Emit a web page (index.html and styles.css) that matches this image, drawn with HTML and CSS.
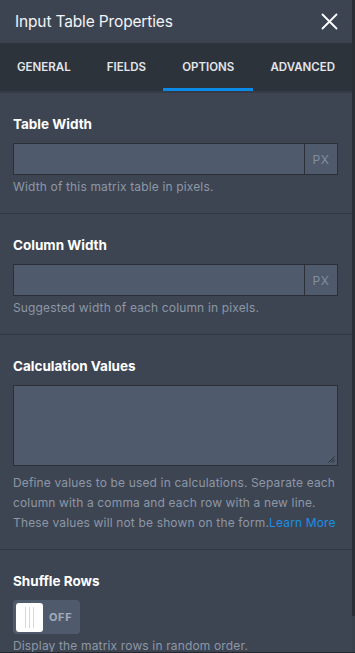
FILE: index.html
```html
<!DOCTYPE html>
<html lang="en">
<head>
<meta charset="utf-8">
<title>Input Table Properties</title>
<link rel="stylesheet" href="styles.css">
</head>
<body>
<div class="app">
  <div class="panel">
    <header class="header">
      <h1 class="title">Input Table Properties</h1>
      <button class="close" aria-label="Close">
        <svg width="17" height="17" viewBox="0 0 17 17"><path d="M1.5 1.5 L15.5 15.5 M15.5 1.5 L1.5 15.5" stroke="#ffffff" stroke-width="1.8" stroke-linecap="round" fill="none"/></svg>
      </button>
    </header>
    <nav class="tabs">
      <div class="tab">GENERAL</div>
      <div class="tab">FIELDS</div>
      <div class="tab active">OPTIONS</div>
      <div class="tab">ADVANCED</div>
    </nav>
    <div class="content">
      <section class="section">
        <div class="label">Table Width</div>
        <div class="input-group">
          <div class="input"></div>
          <div class="addon">PX</div>
        </div>
        <div class="help">Width of this matrix table in pixels.</div>
      </section>
      <section class="section">
        <div class="label">Column Width</div>
        <div class="input-group">
          <div class="input"></div>
          <div class="addon">PX</div>
        </div>
        <div class="help">Suggested width of each column in pixels.</div>
      </section>
      <section class="section">
        <div class="label">Calculation Values</div>
        <div class="textarea">
          <svg class="grip" width="7" height="7" viewBox="0 0 7 7"><path d="M6.5 0.5 L0.5 6.5 M6.5 3 L3 6.5 M6.5 5.2 L5.2 6.5" stroke="#2a2f37" stroke-width="1" fill="none"/></svg>
        </div>
        <div class="help help-area">Define values to be used in calculations. Separate each column with a comma and each row with a new line. These values will not be shown on the form.<a class="link" href="#">Learn More</a></div>
      </section>
      <section class="section">
        <div class="label">Shuffle Rows</div>
        <div class="toggle">
          <div class="knob"><span></span><span></span><span></span></div>
          <div class="toggle-text">OFF</div>
        </div>
        <div class="help">Display the matrix rows in random order.</div>
      </section>
    </div>
  </div>
  <div class="scrollbar">
    <div class="track"></div>
    <div class="thumb"></div>
  </div>
</div>
</body>
</html>
```
FILE: styles.css
```css
* { box-sizing: border-box; }
html, body { margin: 0; padding: 0; }
body {
  font-family: Inter, "Noto Sans", "Liberation Sans", sans-serif;
  background: #3d4552;
  -webkit-font-smoothing: antialiased;
}
.app {
  display: flex;
  width: 355px;
  height: 653px;
  overflow: hidden;
  border-bottom: 1px solid #23272e;
}
.panel {
  width: 352px;
  display: flex;
  flex-direction: column;
  overflow: hidden;
}
.scrollbar {
  width: 3px;
  display: flex;
  flex-direction: column;
  background: #2a2f36;
}
.track { flex: 1; }
.thumb { height: 36px; background: #3a424e; }
.header {
  height: 43px;
  flex: none;
  background: #3c4452;
  display: flex;
  align-items: center;
  justify-content: space-between;
  padding: 0 14px 0 15px;
}
.title {
  margin: 0;
  font-size: 15.5px;
  font-weight: 400;
  color: #f3f4f6;
  letter-spacing: -0.15px;
}
.close {
  background: none;
  border: 0;
  padding: 0;
  width: 17px;
  height: 17px;
  display: flex;
}
.tabs {
  height: 50px;
  flex: none;
  background: #2d333b;
  display: flex;
  justify-content: space-between;
  border-bottom: 2px solid #353c47;
}
.tab {
  padding: 0 17px;
  font-size: 11.5px;
  font-weight: 600;
  color: #e3e6ea;
  display: flex;
  align-items: center;
  letter-spacing: 0;
  border-bottom: 3px solid transparent;
  padding-top: 2px;
}
.tab.active {
  border-bottom-color: #0c8be6;
  padding-left: 19px;
  padding-right: 19px;
  margin: 0 -2px;
}
.content {
  flex: 1;
  overflow: hidden;
  background: #3d4552;
}
.section {
  padding: 22px 14px 16px 13px;
  border-bottom: 1px solid #313743;
}
.label {
  font-size: 13.5px;
  line-height: 18px;
  font-weight: 700;
  color: #ffffff;
  margin-bottom: 10px;
}
.input-group {
  display: flex;
  height: 32px;
  border: 1px solid #2b3038;
  background: #4f5a6c;
}
.input { flex: 1; }
.addon {
  width: 33px;
  border-left: 1px solid #2b3038;
  display: flex;
  align-items: center;
  justify-content: center;
  font-size: 12px;
  color: #838da0;
  letter-spacing: 0.5px;
}
.help {
  margin-top: 2px;
  font-size: 12px;
  line-height: 20px;
  color: #8e97a6;
  letter-spacing: 0.15px;
}
.help-area { margin-top: 7px; margin-right: -2px; }
.link { color: #1a8fe3; text-decoration: none; white-space: nowrap; }
.textarea {
  height: 81px;
  border: 1px solid #2b3038;
  background: #4f5a6c;
  display: flex;
  align-items: flex-end;
  justify-content: flex-end;
  padding: 2px;
}
.grip { display: block; }
.toggle {
  width: 67px;
  height: 34px;
  border-radius: 4px;
  background: #4f5a6c;
  display: flex;
  align-items: center;
  padding: 0 3px;
  gap: 6px;
}
.knob {
  width: 27px;
  height: 29px;
  background: #ffffff;
  border-radius: 3px;
  display: flex;
  justify-content: center;
  align-items: center;
  gap: 2.7px;
}
.knob span {
  width: 1px;
  height: 21px;
  background: #d6d8dc;
}
.toggle-text {
  font-size: 11px;
  font-weight: 700;
  color: #a4acb9;
  letter-spacing: 0.6px;
}
```
